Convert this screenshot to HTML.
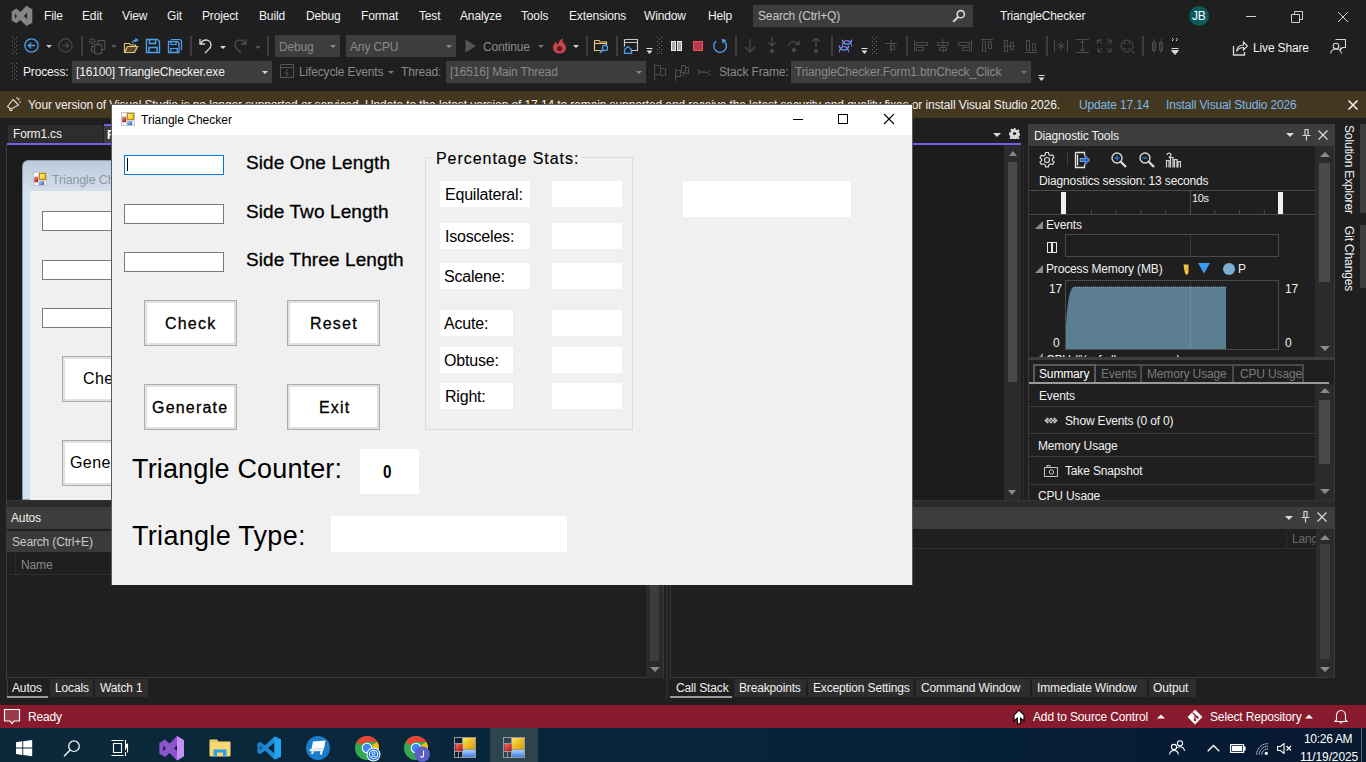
<!DOCTYPE html>
<html><head><meta charset="utf-8">
<style>
*{margin:0;padding:0;box-sizing:border-box}
html,body{width:1366px;height:762px;overflow:hidden;background:#1f1f1f;font-family:"Liberation Sans",sans-serif;font-size:12px;color:#f1f1f1;letter-spacing:-0.15px}
.a{position:absolute}
.t{position:absolute;white-space:nowrap;line-height:1}
.dd{position:absolute;background:#3d3d3d}
.arr{position:absolute;width:0;height:0;border-left:3px solid transparent;border-right:3px solid transparent;border-top:3px solid #c8c8c8}
.sep{position:absolute;width:2px;background:#3d3d3d;top:36px;height:20px}
.grip{position:absolute;width:5px;background-image:linear-gradient(0deg,transparent 1px,#1f1f1f 1px),linear-gradient(90deg,#5a5a5a 1px,transparent 1px);background-size:3px 2px}
.btn{width:93px;height:46px;background:#fff;border:1px solid #adadad;box-shadow:inset 0 0 0 2px #e1e1e1}
.fl{color:#000;font-size:19px;letter-spacing:0.1px;-webkit-text-stroke:0.3px #000}
.fb{color:#000;font-size:16px;letter-spacing:1.2px;-webkit-text-stroke:0.3px #000}
.fs{color:#000;font-size:16px;letter-spacing:-0.2px}
.fx{color:#000;font-size:27px;letter-spacing:0.3px}
.wb{height:26px;background:#fff}
</style></head><body>
<svg width="0" height="0" style="position:absolute"><defs><pattern id="gp" width="4" height="4" patternUnits="userSpaceOnUse"><rect x="0" y="0" width="1" height="1" fill="#6a6a6a"/><rect x="2" y="2" width="1" height="1" fill="#6a6a6a"/></pattern></defs></svg>

<!-- ===== Title / menu bar ===== -->
<div class="a" style="left:0;top:0;width:1366px;height:31px;background:#1f1f1f"></div>
<svg class="a" style="left:0;top:0" width="40" height="30" viewBox="0 0 40 30"><path d="M16.3 8.6L20.3 11.9L26.4 5.7L32.3 9.3V22.7L26.4 26.1L20.3 20L16.3 23.3L11.7 20.5V11.5ZM14.9 13.6V18.4L17.2 16ZM27 12.8L24 16L27 19.1Z" fill="#858585" fill-rule="evenodd"/></svg>
<div class="t" style="left:44px;top:10px">File</div>
<div class="t" style="left:82px;top:10px">Edit</div>
<div class="t" style="left:122px;top:10px">View</div>
<div class="t" style="left:167px;top:10px">Git</div>
<div class="t" style="left:202px;top:10px">Project</div>
<div class="t" style="left:259px;top:10px">Build</div>
<div class="t" style="left:306px;top:10px">Debug</div>
<div class="t" style="left:361px;top:10px">Format</div>
<div class="t" style="left:419px;top:10px">Test</div>
<div class="t" style="left:460px;top:10px">Analyze</div>
<div class="t" style="left:521px;top:10px">Tools</div>
<div class="t" style="left:569px;top:10px">Extensions</div>
<div class="t" style="left:644px;top:10px">Window</div>
<div class="t" style="left:708px;top:10px">Help</div>
<div class="a" style="left:753px;top:5px;width:220px;height:22px;background:#3d3d3d"></div>
<div class="t" style="left:758px;top:10px;color:#c8c8c8">Search (Ctrl+Q)</div>
<div class="t" style="left:1000px;top:10px;color:#f1f1f1">TriangleChecker</div>
<div class="a" style="left:1189px;top:6px;width:20px;height:20px;border-radius:50%;background:#0b5a5d"></div>
<div class="t" style="left:1192px;top:10px;font-size:12px;color:#fff">JB</div>
<div class="a" style="left:1246px;top:16px;width:10px;height:1px;background:#d0d0d0"></div>
<svg class="a" style="left:952px;top:9px" width="14" height="14" viewBox="0 0 14 14"><circle cx="8.8" cy="5.2" r="3.6" fill="none" stroke="#d8d8d8" stroke-width="1.6"/><path d="M6.3 7.8L1.2 12.9" stroke="#d8d8d8" stroke-width="2"/></svg>
<svg class="a" style="left:1291px;top:11px" width="12" height="12" viewBox="0 0 12 12"><path d="M0.5 3.5h8v8h-8z" fill="none" stroke="#d0d0d0"/><path d="M3.5 3.5v-3h8v8h-3" fill="none" stroke="#d0d0d0"/></svg>
<svg class="a" style="left:1337px;top:11px" width="12" height="12" viewBox="0 0 12 12"><path d="M1 1l10 10M11 1L1 11" stroke="#d0d0d0" stroke-width="1"/></svg>


<!-- ===== Toolbar row 1 ===== -->
<svg class="a" style="left:12px;top:37px" width="5" height="17"><rect width="5" height="17" fill="url(#gp)"/></svg>
<svg class="a" style="left:24px;top:38px" width="15" height="15" viewBox="0 0 15 15"><circle cx="7.5" cy="7.5" r="6.6" fill="none" stroke="#4fa0ea" stroke-width="1.3"/><path d="M11 7.5H4.3M7.2 4.6L4.3 7.5L7.2 10.4" fill="none" stroke="#4fa0ea" stroke-width="1.3"/></svg>
<div class="arr" style="left:46px;top:45px"></div>
<svg class="a" style="left:58px;top:38px" width="15" height="15" viewBox="0 0 15 15"><circle cx="7.5" cy="7.5" r="6.6" fill="none" stroke="#4a4a4a" stroke-width="1.2"/><path d="M4 7.5H10.7M7.8 4.6L10.7 7.5L7.8 10.4" fill="none" stroke="#4a4a4a" stroke-width="1.2"/></svg>
<div class="sep" style="left:81px"></div>
<svg class="a" style="left:87px;top:37px" width="19" height="18" viewBox="0 0 19 18"><g fill="none" stroke="#5a5a5a" stroke-width="1"><path d="M10.9 3.6h7v9h-7z"/><path d="M7.7 7.7h7v9h-7z" fill="#1f1f1f"/><path d="M7.5 9.3H4.6v5.5h3"/><path d="M5.3 1v2.4M5.3 5.5v2.4M1.6 4.4h2.4M6.6 4.4h2.4M2.8 1.9l1.3 1.3M6.5 5.6l1.3 1.3M7.8 1.9L6.5 3.2M4.1 5.6L2.8 6.9"/></g></svg>
<div class="arr" style="left:111px;top:45px;border-top-color:#5a5a5a"></div>
<svg class="a" style="left:123px;top:38px" width="16" height="16" viewBox="0 0 16 16"><path d="M1.5 5.5h5l1 1.5h5v2" fill="none" stroke="#e8c47a" stroke-width="1.2"/><path d="M1.5 5.5V14.5h10l3-6h-10l-3 6" fill="#5a4a2a" stroke="#e8c47a" stroke-width="1.2"/><path d="M9.5 5.5c0-2.5 2-3.5 4.5-3.5M12 0.5L14.5 2L12 3.8" fill="none" stroke="#4fa0ea" stroke-width="1.2"/></svg>
<svg class="a" style="left:145px;top:38px" width="16" height="16" viewBox="0 0 16 16"><path d="M1.5 1.5h11l2 2v11h-13z" fill="none" stroke="#4fa0ea" stroke-width="1.4"/><path d="M4.5 1.5v4h6v-4M4 14.5v-5h8v5" fill="none" stroke="#4fa0ea" stroke-width="1.4"/></svg>
<svg class="a" style="left:167px;top:38px" width="16" height="16" viewBox="0 0 16 16"><path d="M4 1.5h9l1.5 1.5v9" fill="none" stroke="#4fa0ea" stroke-width="1.2"/><path d="M1.5 3.5h9l1.5 1.5v9.5h-10.5z" fill="none" stroke="#4fa0ea" stroke-width="1.3"/><path d="M4 3.5v3h5v-3M3.8 14.5v-4h6.4v4" fill="none" stroke="#4fa0ea" stroke-width="1.2"/></svg>
<div class="sep" style="left:190px"></div>
<svg class="a" style="left:198px;top:37px" width="15" height="17" viewBox="0 0 15 17"><path d="M2 2v5h5" fill="none" stroke="#d8d8d8" stroke-width="1.3"/><path d="M2.3 6.8C4 4 6 3 8 3c3 0 5 2.3 5 5 0 2-1 3.5-2.5 4.5L7 16" fill="none" stroke="#d8d8d8" stroke-width="1.3"/></svg>
<div class="arr" style="left:220px;top:46px;border-top-color:#d8d8d8"></div>
<svg class="a" style="left:233px;top:37px" width="15" height="17" viewBox="0 0 15 17"><path d="M13 2v5H8" fill="none" stroke="#4d4d4d" stroke-width="1.3"/><path d="M12.7 6.8C11 4 9 3 7 3 4 3 2 5.3 2 8c0 2 1 3.5 2.5 4.5L8 16" fill="none" stroke="#4d4d4d" stroke-width="1.3"/></svg>
<div class="arr" style="left:255px;top:46px;border-top-color:#555"></div>
<div class="sep" style="left:267px"></div>
<div class="dd" style="left:275px;top:35px;width:65px;height:22px"></div>
<div class="t" style="left:279px;top:41px;color:#8a8a8a">Debug</div>
<div class="arr" style="left:330px;top:45px;border-top-color:#8a8a8a"></div>
<div class="dd" style="left:346px;top:35px;width:110px;height:22px"></div>
<div class="t" style="left:350px;top:41px;color:#8a8a8a">Any CPU</div>
<div class="arr" style="left:446px;top:45px;border-top-color:#8a8a8a"></div>
<svg class="a" style="left:465px;top:39px" width="12" height="14" viewBox="0 0 12 14"><path d="M0.5 0.5L11 7L0.5 13.5Z" fill="#555"/></svg>
<div class="t" style="left:483px;top:41px;color:#8a8a8a">Continue</div>
<div class="arr" style="left:538px;top:45px;border-top-color:#777"></div>
<svg class="a" style="left:552px;top:38px" width="15" height="16" viewBox="0 0 15 16"><path d="M7.5 15.5C3.5 15.5 1 13 1 9.5 1 6.5 3 5 4 3.5 4.5 5 5 6 6 6.5 6 4 8 1.5 11 0.5 10 2.5 10.5 4 12 5.5 13.5 7 14 8.5 14 10 14 13 11.5 15.5 7.5 15.5Z" fill="#c8444b"/><circle cx="7.5" cy="10.5" r="2.6" fill="#5a1e22"/></svg>
<div class="arr" style="left:573px;top:45px;border-top-color:#d8d8d8"></div>
<div class="sep" style="left:586px"></div>
<svg class="a" style="left:593px;top:38px" width="17" height="16" viewBox="0 0 17 16"><path d="M1.5 2.5h4.5l1 1.5h6.5v3" fill="none" stroke="#e8c47a" stroke-width="1.2"/><path d="M1.5 2.5v10h7" fill="none" stroke="#e8c47a" stroke-width="1.2"/><path d="M1.5 5.5h12" stroke="#e8c47a" stroke-width="1.2"/><circle cx="12" cy="10" r="2.6" fill="none" stroke="#4fa0ea" stroke-width="1.3"/><path d="M10.2 11.8L7 15" stroke="#4fa0ea" stroke-width="1.5"/></svg>
<div class="sep" style="left:616px"></div>
<svg class="a" style="left:623px;top:38px" width="16" height="16" viewBox="0 0 16 16"><path d="M1.5 1.5h13v11h-7" fill="none" stroke="#c8c8c8" stroke-width="1.2"/><path d="M1.5 1.5v7M1.5 4.5h13" stroke="#c8c8c8" stroke-width="1.2"/><path d="M1.5 11.5L5 8.5L8.5 11.5V15.5H1.5Z" fill="none" stroke="#4fa0ea" stroke-width="1.3"/></svg>
<svg class="a" style="left:646px;top:48px" width="7" height="7" viewBox="0 0 7 7"><path d="M0.5 0.5h6" stroke="#e0e0e0" stroke-width="1"/><path d="M0.5 2.5h6L3.5 6Z" fill="#e0e0e0"/></svg>
<svg class="a" style="left:657px;top:37px" width="5" height="17"><rect width="5" height="17" fill="url(#gp)"/></svg>
<div class="a" style="left:671px;top:41px;width:5px;height:10px;background:#a8a8a8;border:1px solid #ececec"></div>
<div class="a" style="left:677px;top:41px;width:5px;height:10px;background:#a8a8a8;border:1px solid #ececec"></div>
<div class="a" style="left:693px;top:41px;width:10px;height:10px;background:#b83c4a;border:1px solid #f24f5a"></div>
<svg class="a" style="left:712px;top:38px" width="16" height="16" viewBox="0 0 16 16"><path d="M4.3 3A6.3 6.3 0 1 0 12.6 3.6" fill="none" stroke="#4fa0ea" stroke-width="1.3"/><path d="M9.5 0.8L14.3 2L10.8 5.5Z" fill="#4fa0ea"/></svg>
<div class="sep" style="left:735px"></div>
<svg class="a" style="left:744px;top:38px" width="12" height="16" viewBox="0 0 12 16"><path d="M6 1v13M1 9l5 5 5-5" fill="none" stroke="#4d4d4d" stroke-width="1.2"/></svg>
<svg class="a" style="left:767px;top:37px" width="10" height="17" viewBox="0 0 10 17"><path d="M5 0v9M1.5 5.5L5 9l3.5-3.5" fill="none" stroke="#4d4d4d" stroke-width="1.2"/><circle cx="5" cy="14" r="2" fill="#4d4d4d"/></svg>
<svg class="a" style="left:787px;top:38px" width="14" height="16" viewBox="0 0 14 16"><path d="M1.5 8C2 4 6 2.5 9.5 4.5L12 6.5M12 2.5v4h-4" fill="none" stroke="#4d4d4d" stroke-width="1.2"/><circle cx="7" cy="12" r="2" fill="#4d4d4d"/></svg>
<svg class="a" style="left:811px;top:37px" width="10" height="17" viewBox="0 0 10 17"><path d="M5 10V1M1.5 4.5L5 1l3.5 3.5" fill="none" stroke="#4d4d4d" stroke-width="1.2"/><circle cx="5" cy="14" r="2" fill="#4d4d4d"/></svg>
<div class="sep" style="left:831px"></div>
<svg class="a" style="left:838px;top:38px" width="16" height="16" viewBox="0 0 16 16"><g fill="none" stroke-width="1.2" stroke-linecap="round"><path d="M4.3 7.8C5.5 1 12.5 1 13.7 7.8" stroke="#a064d8"/><path d="M4.3 2C5.5 7.5 12.5 7.5 13.7 2" stroke="#4fa8f0"/><path d="M1.3 13.8C2.5 7 9.5 7 10.7 13.8" stroke="#a064d8"/><path d="M1.3 8C2.5 13.5 9.5 13.5 10.7 8" stroke="#4fa8f0"/></g></svg>
<svg class="a" style="left:861px;top:48px" width="7" height="7" viewBox="0 0 7 7"><path d="M0.5 0.5h6" stroke="#e0e0e0" stroke-width="1"/><path d="M0.5 2.5h6L3.5 6Z" fill="#e0e0e0"/></svg>
<svg class="a" style="left:872px;top:37px" width="5" height="17"><rect width="5" height="17" fill="url(#gp)"/></svg>
<svg class="a" style="left:885px;top:40px" width="13" height="12" viewBox="0 0 13 12"><path d="M0 3.5h12M6 0v12M5.5 5.5h4v4h-4z" fill="none" stroke="#4d4d4d" stroke-width="1"/></svg>
<div class="sep" style="left:906px"></div>
<svg class="a" style="left:914px;top:39px" width="125" height="14" viewBox="0 0 125 14"><g fill="none" stroke="#4d4d4d" stroke-width="1">
<path d="M0.5 1v12M2.5 3.5h11v3h-11zM2.5 8.5h7v3h-7z"/>
<path d="M29 0v14M23.5 3.5h11v3h-11zM25.5 8.5h7v3h-7z"/>
<path d="M57.5 1v12M44.5 3.5h11v3h-11zM48.5 8.5h7v3h-7z"/>
<path d="M67 0.5h12M68.5 2.5h3v10h-3zM74.5 2.5h3v7h-3z"/>
<path d="M89 7h12M90.5 1.5h3v11h-3zM96.5 3.5h3v7h-3z"/>
<path d="M111 13.5h12M112.5 1.5h3v10h-3zM118.5 4.5h3v7h-3z"/>
</g></svg>
<div class="sep" style="left:1046px"></div>
<svg class="a" style="left:1054px;top:39px" width="82" height="15" viewBox="0 0 82 15"><g fill="none" stroke="#4d4d4d" stroke-width="1">
<path d="M0.5 1v12M13.5 1v12M7 3v8M3.5 5l7 4M10.5 5l-7 4"/>
<path d="M22 0.5h13M22 13.5h13M28.5 2v10M26 4l2.5-2 2.5 2M26 10l2.5 2 2.5-2"/>
<path d="M44 1h-0.5v4M44 1h4M57 1v4M57 1h-4M44 13v-4M44 13h4M57 13v-4M57 13h-4M44 1l4 4M57 1l-4 4M44 13l4-4M57 13l-4-4"/>
<circle cx="73" cy="7" r="6"/><path d="M77.5 11.5l3.5 3.5M70 5v-1h2M76 5v-1h-2M70 9v1h2M76 9v1h-2"/>
</g></svg>
<div class="sep" style="left:1142px"></div>
<svg class="a" style="left:1151px;top:39px" width="13" height="14" viewBox="0 0 13 14"><g fill="none" stroke="#4d4d4d" stroke-width="1"><path d="M1.5 3.5h3v8h-3zM8.5 3.5h3v8h-3zM3 0v14M10 0v14"/></g></svg>
<svg class="a" style="left:1171px;top:37px" width="8" height="18" viewBox="0 0 8 18"><path d="M1 1l1.5 1.5L1 4M5 1l1.5 1.5L5 4" stroke="#d8d8d8" fill="none" stroke-width="1"/><path d="M0.5 11.5h7M0.5 13.5h7L4 17.5Z" stroke="#d8d8d8" stroke-width="1" fill="#d8d8d8"/></svg>
<svg class="a" style="left:1232px;top:40px" width="16" height="16" viewBox="0 0 16 16"><path d="M1.5 6v9h11v-3" fill="none" stroke="#d8d8d8" stroke-width="1.3"/><path d="M4.5 11.5C5 7 8 5 11.5 5V2l4 4-4 4V7.5C8.5 7.5 6 9 4.5 11.5Z" fill="none" stroke="#d8d8d8" stroke-width="1.2"/></svg>
<div class="t" style="left:1253px;top:42px;color:#f1f1f1">Live Share</div>
<svg class="a" style="left:1330px;top:39px" width="16" height="15" viewBox="0 0 16 15"><path d="M5.5 0.5h10v8h-3l-2 2v-2" fill="none" stroke="#d8d8d8" stroke-width="1.1"/><circle cx="6" cy="7" r="2.8" fill="#1f1f1f" stroke="#d8d8d8" stroke-width="1.1"/><path d="M0.5 14.5C1 11 3 10 6 10s5 1 5.5 4.5" fill="none" stroke="#d8d8d8" stroke-width="1.1"/></svg>

<!-- ===== Toolbar row 2 ===== -->
<svg class="a" style="left:12px;top:63px" width="5" height="17"><rect width="5" height="17" fill="url(#gp)"/></svg>
<div class="t" style="left:23px;top:66px;color:#f1f1f1">Process:</div>
<div class="dd" style="left:72px;top:61px;width:200px;height:22px"></div>
<div class="t" style="left:76px;top:66px;color:#f1f1f1">[16100] TriangleChecker.exe</div>
<div class="arr" style="left:262px;top:71px;border-top-color:#d8d8d8"></div>
<svg class="a" style="left:280px;top:64px" width="14" height="14" viewBox="0 0 14 14"><path d="M0.5 0.5h13v13h-13zM0.5 3.5h13M8 5L5 9h3l-2 3.5" fill="none" stroke="#555" stroke-width="1"/></svg>
<div class="t" style="left:299px;top:66px;color:#8a8a8a">Lifecycle Events</div>
<div class="arr" style="left:388px;top:71px;border-top-color:#777"></div>
<div class="t" style="left:401px;top:66px;color:#8a8a8a">Thread:</div>
<div class="dd" style="left:446px;top:61px;width:200px;height:22px"></div>
<div class="t" style="left:450px;top:66px;color:#8a8a8a">[16516] Main Thread</div>
<div class="arr" style="left:636px;top:71px;border-top-color:#8a8a8a"></div>
<svg class="a" style="left:654px;top:64px" width="58" height="17" viewBox="0 0 58 17"><g fill="none" stroke="#4d4d4d" stroke-width="1"><path d="M0.5 0v16M0.5 1.5h6v9h-6M6.5 4.5h5v7h-5"/><path d="M21.5 5v12M21.5 6.5h5v6h-5M26.5 8.5h3v4M27.5 1.5h4v7h-4v-7M31.5 3.5h3v6h-3"/><path d="M43 5c3 3 8 6 14 1M43 11c3-3 8-6 14 1M44 8h2"/></g></svg>
<div class="t" style="left:719px;top:66px;color:#8a8a8a">Stack Frame:</div>
<div class="dd" style="left:791px;top:61px;width:240px;height:22px"></div>
<div class="t" style="left:795px;top:66px;color:#8a8a8a">TriangleChecker.Form1.btnCheck_Click</div>
<div class="arr" style="left:1021px;top:71px;border-top-color:#777"></div>
<svg class="a" style="left:1038px;top:75px" width="7" height="7" viewBox="0 0 7 7"><path d="M0.5 0.5h6" stroke="#e0e0e0" stroke-width="1"/><path d="M0.5 2.5h6L3.5 6Z" fill="#e0e0e0"/></svg>

<!-- ===== Banner ===== -->
<div class="a" style="left:0;top:91px;width:1366px;height:27px;background:#44371f"></div>
<svg class="a" style="left:6px;top:96px" width="16" height="16" viewBox="0 0 16 16"><path d="M1.5 10.5L7 3.5L12.5 9L5 13Z" fill="none" stroke="#d8d8d8" stroke-width="1.2" stroke-linejoin="round"/><path d="M3.5 12.5C3 14.5 5.5 15.5 6.5 13.5" fill="none" stroke="#d8d8d8" stroke-width="1.1"/><path d="M11 1v2M13.5 2.5l-1.5 1.5M15 6h-2" stroke="#d8d8d8" stroke-width="1.1"/></svg>
<div class="t" style="left:28px;top:99px;color:#f1f1f1;letter-spacing:-0.1px">Your version of Visual Studio is no longer supported or serviced. Update to the latest version of 17.14 to remain supported and receive the latest security and quality fixes or install Visual Studio 2026.</div>
<div class="t" style="left:1079px;top:99px;color:#7bb7ee">Update 17.14</div>
<div class="t" style="left:1166px;top:99px;color:#7bb7ee">Install Visual Studio 2026</div>
<svg class="a" style="left:1347px;top:99px" width="12" height="12" viewBox="0 0 12 12"><path d="M1.5 1.5l9 9M10.5 1.5l-9 9" stroke="#f0f0f0" stroke-width="1.6"/></svg>


<!-- ===== Document area ===== -->
<div class="a" style="left:0;top:118px;width:1028px;height:382px;background:#1f1f1f"></div>
<div class="a" style="left:8px;top:125px;width:95px;height:18px;background:#2d2d2d"></div>
<div class="t" style="left:13px;top:128px;color:#f1f1f1">Form1.cs</div>
<div class="a" style="left:104px;top:124px;width:300px;height:19px;background:#3d3d3d;border-top:2px solid #7160e8"></div>
<div class="t" style="left:107px;top:129px;color:#fff;font-weight:bold">Form1.cs [Design]</div>
<div class="a" style="left:7px;top:143px;width:1014px;height:2px;background:#7160e8"></div>
<div class="arr" style="left:993px;top:133px;border-left-width:4px;border-right-width:4px;border-top-width:4px;border-top-color:#d8d8d8"></div>
<svg class="a" style="left:1009px;top:128px" width="11" height="11" viewBox="0 0 11 11"><path d="M4.6 0h1.8l0.3 1.6 1.2 0.6 1.4-0.9 1.3 1.3-0.9 1.4 0.6 1.2 1.6 0.3v1.8l-1.6 0.3-0.6 1.2 0.9 1.4-1.3 1.3-1.4-0.9-1.2 0.6-0.3 1.6H4.6l-0.3-1.6-1.2-0.6-1.4 0.9-1.3-1.3 0.9-1.4-0.6-1.2L0 6.4V4.6l1.6-0.3 0.6-1.2-0.9-1.4 1.3-1.3 1.4 0.9 1.2-0.6Z" fill="#d8d8d8"/><circle cx="5.5" cy="5.5" r="1.6" fill="#1f1f1f"/></svg>
<div class="a" style="left:6px;top:145px;width:1px;height:355px;background:#3a3a3a"></div>
<div class="a" style="left:7px;top:145px;width:997px;height:355px;background:#1b1b1b"></div>
<div class="a" style="left:1004px;top:145px;width:17px;height:355px;background:#2b2b2b"></div>
<div class="a" style="left:1008px;top:162px;width:9px;height:220px;background:#4a4a4a"></div>
<div class="a" style="left:1008px;top:490px;width:0;height:0;border-left:4px solid transparent;border-right:4px solid transparent;border-top:5px solid #8a8a8a"></div>
<div class="a" style="left:1009px;top:151px;width:0;height:0;border-left:4px solid transparent;border-right:4px solid transparent;border-bottom:5px solid #8a8a8a"></div>
<div class="a" style="left:1021px;top:118px;width:7px;height:382px;background:#1f1f1f"></div>
<div class="a" style="left:1023px;top:145px;width:1px;height:355px;background:#2d2d2d"></div>
<!-- designer form preview -->
<div class="a" style="left:22px;top:160px;width:200px;height:340px;border:1px solid #8a9ab0;border-radius:6px 0 0 0;background:linear-gradient(#bccadb,#d3dfec 30px,#d5e2f0 31px)"></div>
<svg class="a" style="left:33px;top:172px" width="14" height="14" viewBox="0 0 14 14"><defs><linearGradient id="diy" x1="0" y1="0" x2="1" y2="1"><stop offset="0" stop-color="#fff2a0"/><stop offset="1" stop-color="#f2b800"/></linearGradient><linearGradient id="dir" x1="0" y1="0" x2="1" y2="1"><stop offset="0" stop-color="#ff9a9a"/><stop offset="1" stop-color="#a80000"/></linearGradient><linearGradient id="dib" x1="0" y1="0" x2="1" y2="1"><stop offset="0" stop-color="#b8d8ff"/><stop offset="1" stop-color="#2a62d0"/></linearGradient></defs><rect x="0.5" y="0.5" width="13" height="13" fill="#fff" stroke="#c4c4c4"/><path d="M5.5 0.5V13.5M0.5 4.5H5.5M0.5 10.5H5.5M5.5 8.5H13.5M2.5 10.5V13.5M11.5 8.5V13.5" stroke="#d4d4d4" stroke-width="1" fill="none"/><rect x="6.5" y="1.5" width="6" height="6" fill="url(#diy)" stroke="#b98c00" stroke-width="1"/><rect x="1" y="5" width="4" height="5" rx="0.5" fill="url(#dir)"/><rect x="6" y="9" width="5" height="4" fill="url(#dib)"/></svg>
<div class="t" style="left:52px;top:174px;color:#8d97a3;font-size:12.5px">Triangle Checker</div>
<div class="a" style="left:30px;top:191px;width:100px;height:309px;background:#f0f0f0"></div>
<div class="a" style="left:42px;top:211px;width:80px;height:20px;background:#fff;border:1px solid #7a7a7a"></div>
<div class="a" style="left:42px;top:260px;width:80px;height:20px;background:#fff;border:1px solid #7a7a7a"></div>
<div class="a" style="left:42px;top:308px;width:80px;height:20px;background:#fff;border:1px solid #7a7a7a"></div>
<div class="a" style="left:62px;top:356px;width:60px;height:46px;background:#fff;border:1px solid #adadad;box-shadow:inset 0 0 0 2px #e1e1e1"></div>
<div class="t" style="left:83px;top:371px;color:#000;font-size:16px;letter-spacing:0.4px">Check</div>
<div class="a" style="left:62px;top:440px;width:60px;height:46px;background:#fff;border:1px solid #adadad;box-shadow:inset 0 0 0 2px #e1e1e1"></div>
<div class="t" style="left:70px;top:455px;color:#000;font-size:16px;letter-spacing:0.4px">Generate</div>

<!-- ===== Diagnostic Tools ===== -->
<div class="a" style="left:1028px;top:124px;width:307px;height:22px;background:#3d3d3d"></div>
<div class="t" style="left:1034px;top:130px;color:#f1f1f1">Diagnostic Tools</div>
<div class="arr" style="left:1286px;top:133px;border-left-width:4px;border-right-width:4px;border-top-width:4px;border-top-color:#d8d8d8"></div>
<svg class="a" style="left:1302px;top:129px" width="9" height="12" viewBox="0 0 9 12"><path d="M2.5 0.5h4M3 0.5v6M6 0.5v6M0.5 6.5h8M4.5 6.5v5" stroke="#d8d8d8" stroke-width="1.2" fill="none"/></svg>
<svg class="a" style="left:1318px;top:130px" width="10" height="10" viewBox="0 0 10 10"><path d="M0.5 0.5l9 9M9.5 0.5l-9 9" stroke="#d8d8d8" stroke-width="1.3"/></svg>
<div class="a" style="left:1028px;top:146px;width:307px;height:354px;background:#1f1f1f;border-left:1px solid #3a3a3a;border-right:1px solid #3a3a3a"></div>
<svg class="a" style="left:1038px;top:151px" width="18" height="18" viewBox="0 0 18 18"><g fill="none" stroke="#d8d8d8" stroke-width="1.2"><circle cx="9" cy="9" r="2.5"/><path d="M7.6 1.5h2.8l0.5 2.2 1.6 0.9 2.1-0.7 1.4 2.4-1.6 1.5v1.8l1.6 1.5-1.4 2.4-2.1-0.7-1.6 0.9-0.5 2.2H7.6l-0.5-2.2-1.6-0.9-2.1 0.7-1.4-2.4 1.6-1.5V8.2L2 6.7l1.4-2.4 2.1 0.7 1.6-0.9z"/></g></svg>
<div class="a" style="left:1067px;top:152px;width:1px;height:14px;background:#3f3f3f"></div>
<svg class="a" style="left:1074px;top:151px" width="18" height="18" viewBox="0 0 18 18"><path d="M1.5 1.5h9v3M1.5 1.5v15h9v-3M3.5 3.5v11" fill="none" stroke="#e8e8e8" stroke-width="1.3"/><path d="M6 7.5h5v-3l5 4.5-5 4.5v-3H6z" fill="#1f6fd0" stroke="#d8e8ff" stroke-width="0.5"/></svg>
<svg class="a" style="left:1111px;top:152px" width="16" height="16" viewBox="0 0 16 16"><circle cx="6" cy="6" r="5" fill="#1f1f1f" stroke="#d8d8d8" stroke-width="1.4"/><path d="M9.5 9.5l5.5 5.5" stroke="#d8d8d8" stroke-width="2.4"/><path d="M3.5 6h5M6 3.5v5" stroke="#2e7ad8" stroke-width="1.4"/></svg>
<svg class="a" style="left:1139px;top:152px" width="16" height="16" viewBox="0 0 16 16"><circle cx="6" cy="6" r="5" fill="#1f1f1f" stroke="#d8d8d8" stroke-width="1.4"/><path d="M9.5 9.5l5.5 5.5" stroke="#d8d8d8" stroke-width="2.4"/><path d="M3.5 6h5" stroke="#2e7ad8" stroke-width="1.4"/></svg>
<svg class="a" style="left:1165px;top:151px" width="16" height="17" viewBox="0 0 16 17"><path d="M1.5 16.5V9.5h2.5v7M5.5 16.5V6.5h2.5v10M9.5 16.5V8.5h2.5v8M13 16.5v-6h2.5v6" fill="none" stroke="#d8d8d8" stroke-width="1.2"/><path d="M2 4c0-2.5 4-2.5 4 0 0 1.5-2 1.5-2 3" fill="none" stroke="#d8d8d8" stroke-width="1.2"/></svg>
<div class="t" style="left:1039px;top:175px;color:#f1f1f1">Diagnostics session: 13 seconds</div>
<div class="a" style="left:1029px;top:190px;width:286px;height:1px;background:#4a4a4a"></div>
<div class="a" style="left:1029px;top:214px;width:286px;height:1px;background:#4a4a4a"></div>
<div class="a" style="left:1190px;top:191px;width:1px;height:23px;background:#4a4a4a"></div>
<div class="t" style="left:1192px;top:193px;color:#f1f1f1;font-size:11px;letter-spacing:-0.4px">10s</div>
<div class="a" style="left:1061px;top:192px;width:5px;height:22px;background:#f0f0f0"></div>
<div class="a" style="left:1278px;top:192px;width:5px;height:22px;background:#f0f0f0"></div>
<div class="a" style="left:1091px;top:210px;width:176px;height:4px;background-image:linear-gradient(90deg,#4a4a4a 1px,transparent 1px);background-size:24.7px 4px;background-position:0 0"></div>
<div class="a" style="left:1315px;top:146px;width:19px;height:211px;background:#2b2b2b"></div>
<div class="a" style="left:1319px;top:163px;width:11px;height:119px;background:#4a4a4a"></div>
<div class="a" style="left:1320px;top:152px;width:0;height:0;border-left:5px solid transparent;border-right:5px solid transparent;border-bottom:5px solid #8a8a8a"></div>
<div class="a" style="left:1320px;top:346px;width:0;height:0;border-left:5px solid transparent;border-right:5px solid transparent;border-top:5px solid #8a8a8a"></div>
<div class="a" style="left:1035px;top:221px;width:0;height:0;border-left:8px solid transparent;border-bottom:8px solid #8a8a8a"></div>
<div class="t" style="left:1046px;top:219px;color:#f1f1f1">Events</div>
<div class="a" style="left:1047px;top:242px;width:10px;height:11px;border:1.5px solid #e8e8e8;border-left-width:1.5px"></div>
<div class="a" style="left:1051px;top:242px;width:2px;height:11px;background:#e8e8e8"></div>
<div class="a" style="left:1065px;top:234px;width:214px;height:23px;border:1px solid #4a4a4a"></div>
<div class="a" style="left:1190px;top:235px;width:1px;height:21px;background:#3a3a3a"></div>
<div class="a" style="left:1035px;top:265px;width:0;height:0;border-left:8px solid transparent;border-bottom:8px solid #8a8a8a"></div>
<div class="t" style="left:1046px;top:263px;color:#f1f1f1">Process Memory (MB)</div>
<svg class="a" style="left:1183px;top:264px" width="6" height="11" viewBox="0 0 6 11"><path d="M0.5 0.5h5v7c0 2-1 3-2 3.5C2 10 1.5 8 0.5 0.5Z" fill="#f2c13d"/></svg>
<svg class="a" style="left:1198px;top:263px" width="12" height="11" viewBox="0 0 12 11"><path d="M0 0h12L6 10.5Z" fill="#3a9cf0"/></svg>
<div class="a" style="left:1223px;top:263px;width:12px;height:12px;border-radius:50%;background:#7bafd4"></div>
<div class="t" style="left:1238px;top:263px;color:#f1f1f1">P</div>
<div class="t" style="left:1049px;top:283px;color:#f1f1f1">17</div>
<div class="t" style="left:1053px;top:337px;color:#f1f1f1">0</div>
<div class="t" style="left:1285px;top:283px;color:#f1f1f1">17</div>
<div class="t" style="left:1285px;top:337px;color:#f1f1f1">0</div>
<div class="a" style="left:1065px;top:280px;width:214px;height:70px;border:1px solid #4a4a4a"></div>
<svg class="a" style="left:1066px;top:281px" width="212" height="68" viewBox="0 0 212 68"><path d="M0 68V45C1 25 3 10 7 6H160V68Z" fill="#5b7e93"/><path d="M9 6H160" stroke="#7aa3ba" stroke-width="1" stroke-dasharray="1 1"/><path d="M124.5 0V68" stroke="#6d8fa3" stroke-width="1"/><path d="M124.5 0V6" stroke="#3a3a3a" stroke-width="1"/></svg>
<div class="a" style="left:1035px;top:353px;width:0;height:0;border-left:8px solid transparent;border-bottom:8px solid #8a8a8a;clip-path:inset(0 0 4px 0)"></div><div class="a" style="left:1046px;top:354px;width:200px;height:3px;overflow:hidden"><div class="t" style="left:0;top:0;color:#f1f1f1">CPU (% of all processors)</div></div>
<div class="a" style="left:1029px;top:357px;width:305px;height:3px;background:#3d3d3d"></div>
<div class="a" style="left:1033px;top:364px;width:63px;height:19px;border:2px solid #5a5a5a;border-bottom:none"></div>
<div class="t" style="left:1039px;top:368px;color:#fff">Summary</div>
<div class="a" style="left:1096px;top:364px;width:46px;height:19px;border:2px solid #4a4a4a;border-bottom:none;border-left:none"></div>
<div class="t" style="left:1101px;top:368px;color:#7a7a7a">Events</div>
<div class="a" style="left:1142px;top:364px;width:92px;height:19px;border:2px solid #4a4a4a;border-bottom:none;border-left:none"></div>
<div class="t" style="left:1147px;top:368px;color:#7a7a7a">Memory Usage</div>
<div class="a" style="left:1234px;top:364px;width:70px;height:19px;border:2px solid #4a4a4a;border-bottom:none;border-left:none"></div>
<div class="t" style="left:1240px;top:368px;color:#7a7a7a">CPU Usage</div>
<div class="a" style="left:1029px;top:382px;width:300px;height:2px;background:#9a9a9a"></div>
<div class="t" style="left:1039px;top:390px;color:#f1f1f1">Events</div>
<div class="a" style="left:1029px;top:406px;width:286px;height:1px;background:#3d3d3d"></div>
<svg class="a" style="left:1044px;top:417px" width="14" height="7" viewBox="0 0 14 7"><path d="M0 3.5L3.5 0 7 3.5 3.5 7ZM3.5 3.5L7 0l3.5 3.5L7 7ZM7 3.5l3.5-3.5L14 3.5 10.5 7Z" fill="#bdbdbd" stroke="#1f1f1f" stroke-width="0.6"/></svg>
<div class="t" style="left:1065px;top:415px;color:#f1f1f1">Show Events (0 of 0)</div>
<div class="a" style="left:1029px;top:433px;width:286px;height:1px;background:#3d3d3d"></div>
<div class="t" style="left:1038px;top:440px;color:#f1f1f1">Memory Usage</div>
<div class="a" style="left:1029px;top:456px;width:286px;height:1px;background:#3d3d3d"></div>
<svg class="a" style="left:1044px;top:465px" width="14" height="12" viewBox="0 0 14 12"><path d="M0.5 2.5h13v9h-13z" fill="none" stroke="#c8c8c8"/><path d="M3 2.5v-2h3v2" fill="none" stroke="#c8c8c8"/><circle cx="7.5" cy="7" r="2.2" fill="none" stroke="#c8c8c8"/></svg>
<div class="t" style="left:1065px;top:465px;color:#f1f1f1">Take Snapshot</div>
<div class="a" style="left:1029px;top:484px;width:286px;height:1px;background:#3d3d3d"></div>
<div class="t" style="left:1038px;top:490px;color:#f1f1f1;height:10px;overflow:hidden">CPU Usage</div>
<div class="a" style="left:1315px;top:384px;width:19px;height:116px;background:#2b2b2b"></div>
<div class="a" style="left:1319px;top:400px;width:11px;height:64px;background:#4a4a4a"></div>
<div class="a" style="left:1320px;top:388px;width:0;height:0;border-left:5px solid transparent;border-right:5px solid transparent;border-bottom:5px solid #8a8a8a"></div>
<div class="a" style="left:1320px;top:489px;width:0;height:0;border-left:5px solid transparent;border-right:5px solid transparent;border-top:5px solid #8a8a8a"></div>

<!-- right side vertical tabs -->
<div class="a" style="left:1335px;top:118px;width:31px;height:587px;background:#1f1f1f"></div>
<div class="a" style="left:1360px;top:124px;width:6px;height:89px;background:#3d3d3d"></div>
<div class="a" style="left:1360px;top:225px;width:6px;height:63px;background:#3d3d3d"></div>
<div class="t" style="left:1343px;top:125px;color:#f1f1f1;writing-mode:vertical-rl">Solution Explorer</div>
<div class="t" style="left:1343px;top:226px;color:#f1f1f1;writing-mode:vertical-rl">Git Changes</div>

<!-- ===== Bottom panels ===== -->
<div class="a" style="left:7px;top:500px;width:1328px;height:7px;background:#2b2b2b;border-top:1px solid #333"></div>
<div class="a" style="left:6px;top:500px;width:1px;height:7px;background:#3a3a3a"></div>
<div class="a" style="left:7px;top:507px;width:657px;height:22px;background:#3d3d3d"></div>
<div class="t" style="left:11px;top:512px;color:#f1f1f1">Autos</div>
<div class="a" style="left:6px;top:507px;width:1px;height:172px;background:#3a3a3a"></div>
<div class="a" style="left:7px;top:531px;width:657px;height:21px;background:#3a3a3a"></div>
<div class="t" style="left:12px;top:536px;color:#c8c8c8">Search (Ctrl+E)</div>
<div class="a" style="left:7px;top:552px;width:657px;height:126px;background:#1f1f1f;border-right:1px solid #3a3a3a;border-bottom:1px solid #3a3a3a"></div>
<div class="a" style="left:15px;top:554px;width:1px;height:20px;background:#2d2d2d"></div>
<div class="a" style="left:7px;top:574px;width:639px;height:1px;background:#2d2d2d"></div>
<div class="t" style="left:21px;top:559px;color:#8a8a8a">Name</div>
<div class="a" style="left:646px;top:575px;width:17px;height:103px;background:#2b2b2b"></div>
<div class="a" style="left:650px;top:580px;width:9px;height:81px;background:#3d3d3d"></div>
<div class="a" style="left:650px;top:667px;width:0;height:0;border-left:5px solid transparent;border-right:5px solid transparent;border-top:5px solid #8a8a8a"></div>
<div class="a" style="left:7px;top:679px;width:41px;height:19px;border-left:1px solid #3a3a3a"></div>
<div class="a" style="left:7px;top:696px;width:41px;height:2px;background:#9a9a9a"></div>
<div class="t" style="left:12px;top:682px;color:#f1f1f1">Autos</div>
<div class="a" style="left:50px;top:679px;width:43px;height:18px;background:#2d2d2d"></div>
<div class="t" style="left:55px;top:682px;color:#f1f1f1">Locals</div>
<div class="a" style="left:95px;top:679px;width:53px;height:18px;background:#2d2d2d"></div>
<div class="t" style="left:100px;top:682px;color:#f1f1f1">Watch 1</div>
<div class="a" style="left:664px;top:507px;width:6px;height:198px;background:#1f1f1f"></div>
<div class="a" style="left:666px;top:507px;width:2px;height:191px;background:#2b2b2b"></div>

<div class="a" style="left:670px;top:507px;width:665px;height:22px;background:#3d3d3d"></div>
<div class="arr" style="left:1285px;top:516px;border-left-width:4px;border-right-width:4px;border-top-width:4px;border-top-color:#d8d8d8"></div>
<svg class="a" style="left:1301px;top:511px" width="9" height="12" viewBox="0 0 9 12"><path d="M2.5 0.5h4M3 0.5v6M6 0.5v6M0.5 6.5h8M4.5 6.5v5" stroke="#d8d8d8" stroke-width="1.2" fill="none"/></svg>
<svg class="a" style="left:1317px;top:512px" width="10" height="10" viewBox="0 0 10 10"><path d="M0.5 0.5l9 9M9.5 0.5l-9 9" stroke="#d8d8d8" stroke-width="1.3"/></svg>
<div class="a" style="left:670px;top:529px;width:665px;height:149px;background:#1f1f1f;border-left:1px solid #3a3a3a;border-right:1px solid #3a3a3a;border-bottom:1px solid #3a3a3a"></div>
<div class="a" style="left:671px;top:548px;width:645px;height:1px;background:#2d2d2d"></div>
<div class="a" style="left:1286px;top:530px;width:1px;height:18px;background:#2d2d2d"></div>
<div class="t" style="left:1292px;top:533px;color:#6a6a6a;width:24px;overflow:hidden">Language</div>
<div class="a" style="left:1316px;top:529px;width:18px;height:148px;background:#2b2b2b"></div>
<div class="a" style="left:1320px;top:544px;width:10px;height:115px;background:#3d3d3d"></div>
<div class="a" style="left:1320px;top:535px;width:0;height:0;border-left:5px solid transparent;border-right:5px solid transparent;border-bottom:5px solid #8a8a8a"></div>
<div class="a" style="left:1320px;top:667px;width:0;height:0;border-left:5px solid transparent;border-right:5px solid transparent;border-top:5px solid #8a8a8a"></div>
<div class="a" style="left:670px;top:696px;width:62px;height:2px;background:#9a9a9a"></div>
<div class="t" style="left:676px;top:682px;color:#f1f1f1">Call Stack</div>
<div class="a" style="left:734px;top:679px;width:72px;height:18px;background:#2d2d2d"></div>
<div class="t" style="left:739px;top:682px;color:#f1f1f1">Breakpoints</div>
<div class="a" style="left:808px;top:679px;width:105px;height:18px;background:#2d2d2d"></div>
<div class="t" style="left:813px;top:682px;color:#f1f1f1">Exception Settings</div>
<div class="a" style="left:916px;top:679px;width:114px;height:18px;background:#2d2d2d"></div>
<div class="t" style="left:921px;top:682px;color:#f1f1f1">Command Window</div>
<div class="a" style="left:1032px;top:679px;width:115px;height:18px;background:#2d2d2d"></div>
<div class="t" style="left:1037px;top:682px;color:#f1f1f1">Immediate Window</div>
<div class="a" style="left:1149px;top:679px;width:47px;height:18px;background:#2d2d2d"></div>
<div class="t" style="left:1153px;top:682px;color:#f1f1f1">Output</div>

<!-- ===== Status bar ===== -->
<div class="a" style="left:0;top:705px;width:1366px;height:23px;background:#871b2d"></div>
<svg class="a" style="left:3px;top:708px" width="18" height="17" viewBox="0 0 18 17"><path d="M1.5 1.5H16.5V13H11L9 15.5L7 13H1.5Z" fill="#9b3a4a" stroke="#fff" stroke-width="1.2"/></svg>
<div class="t" style="left:28px;top:711px;color:#fff">Ready</div>
<svg class="a" style="left:1013px;top:709px" width="12" height="16" viewBox="0 0 12 16"><path d="M6 1.2L11 6.2V12L7.6 9.2V14.8H4.4V9.2L1 12V6.2Z" fill="#fff" stroke="#000" stroke-width="1.1" stroke-linejoin="miter"/></svg>
<svg class="a" style="left:1157px;top:714px" width="8" height="5" viewBox="0 0 8 5"><path d="M0 4.5L4 0.5L8 4.5Z" fill="#fff"/></svg>
<svg class="a" style="left:1187px;top:709px" width="16" height="16" viewBox="0 0 16 16"><path d="M8 0.5L15.5 8L8 15.5L0.5 8Z" fill="#fff"/><path d="M5.5 3.5L10 8M8 6V11.5M8 6L10.5 8.5" stroke="#8a1c2e" stroke-width="1.2"/><circle cx="8" cy="11" r="1.2" fill="#8a1c2e"/><circle cx="10.5" cy="8.5" r="1.2" fill="#8a1c2e"/></svg>
<svg class="a" style="left:1305px;top:714px" width="8" height="5" viewBox="0 0 8 5"><path d="M0 4.5L4 0.5L8 4.5Z" fill="#fff"/></svg>
<svg class="a" style="left:1334px;top:709px" width="14" height="15" viewBox="0 0 14 15"><path d="M2.5 11V6.5C2.5 3.5 4.5 1.5 7 1.5S11.5 3.5 11.5 6.5V11L13 12.5H1Z" fill="none" stroke="#fff" stroke-width="1.1"/><path d="M5.5 13.5C5.8 14.3 8.2 14.3 8.5 13.5" stroke="#fff" fill="none"/></svg>
<div class="t" style="left:1033px;top:711px;color:#fff">Add to Source Control</div>
<div class="t" style="left:1210px;top:711px;color:#fff">Select Repository</div>

<!-- ===== Taskbar ===== -->
<div class="a" style="left:0;top:728px;width:1366px;height:34px;background:linear-gradient(90deg,#0b293a,#08263a 45%,#062039 70%,#061b36 85%,#081a30)"></div>
<svg class="a" style="left:16px;top:740px" width="17" height="17" viewBox="0 0 17 17"><path d="M0 2.2L6.3 1.3V7.5H0ZM7.2 1.2L16.2 0V7.5H7.2ZM0 8.4H6.3V14.9L0 14ZM7.2 8.4H16.2V16.3L7.2 15Z" fill="#fff"/></svg>
<svg class="a" style="left:63px;top:740px" width="18" height="17" viewBox="0 0 18 17"><circle cx="11" cy="6.2" r="5.3" fill="none" stroke="#fff" stroke-width="1.2"/><path d="M7.2 10L1 16.3" stroke="#fff" stroke-width="1.3"/></svg>
<svg class="a" style="left:111px;top:740px" width="18" height="16" viewBox="0 0 18 16"><path d="M0.5 0.5h12M0.5 15.5h12M2.5 3.5h8v9h-8zM14.5 0v4M14.5 6v4M14.5 12v4M16.5 3.5v9" fill="none" stroke="#fff" stroke-width="1.1"/><rect x="14" y="4" width="3" height="4" fill="#fff"/></svg>
<svg class="a" style="left:158px;top:735px" width="26" height="26" viewBox="0 0 26 26"><g transform="translate(-12.7,-5.9) scale(1.2)" transform-origin="0 0"><path d="M16.3 8.6L20.3 11.9L26.4 5.7L32.3 9.3V22.7L26.4 26.1L20.3 20L16.3 23.3L11.7 20.5V11.5ZM14.9 13.6V18.4L17.2 16ZM27 12.8L24 16L27 19.1Z" fill="#8c55cc" fill-rule="evenodd"/><path d="M26.4 5.7L32.3 9.3V22.7L26.4 26.1Z" fill="#c48ff5"/></g></svg>
<svg class="a" style="left:209px;top:739px" width="22" height="18" viewBox="0 0 22 18"><path d="M0.5 1.5Q0.5 0.5 1.5 0.5H8L9.5 2.5H20.5Q21.5 2.5 21.5 3.5V16.5Q21.5 17.5 20.5 17.5H1.5Q0.5 17.5 0.5 16.5Z" fill="#f8d775"/><path d="M1.5 2.5H9" stroke="#e8b84a"/><path d="M4.5 17.5V10.5H17.5V17.5H14V13.5H8V17.5Z" fill="#29a3e6"/></svg>
<svg class="a" style="left:257px;top:736px" width="24" height="24" viewBox="0 0 24 24"><path d="M17.5 0.5L24 3.5V20.5L17.5 23.5L8 14.5L3.5 18L0.5 16.5V7.5L3.5 6L8 9.5ZM17.5 6.5L11 12L17.5 17.5ZM3 9.5V14.5L5.5 12Z" fill="#1f8ad8" fill-rule="evenodd"/><path d="M17.5 0.5L24 3.5V20.5L17.5 23.5Z" fill="#25a4ee"/><path d="M17.5 0.5L3.5 14L1 12.5L0.5 8L3.5 6L8 9.5Z" fill="#1a75bd" opacity="0.6"/></svg>
<svg class="a" style="left:306px;top:736px" width="24" height="24" viewBox="0 0 24 24"><circle cx="12" cy="12" r="12" fill="#1b7dc7"/><path d="M7 5.5L19.5 4.5L18 12.5L5.5 13Z" fill="#fff"/><path d="M3.5 13L18 12.5L17 15L4 15.5Z" fill="#e8eef5"/><path d="M6 15.5L5 18L7 18L8 15.5ZM14.5 15L14 18.5L16 18.5L16.5 15Z" fill="#fff"/></svg>
<svg class="a" style="left:355px;top:736px" width="27" height="26" viewBox="0 0 27 26"><circle cx="12" cy="12" r="12" fill="#34a853"/><path d="M12 0A12 12 0 0 1 22.4 6H12A6 6 0 0 0 6.8 9L1.6 6A12 12 0 0 1 12 0Z" fill="#ea4335"/><path d="M22.4 6A12 12 0 0 1 13 24L17.2 15A6 6 0 0 0 17.2 9Z" fill="#fbbc05"/><circle cx="12" cy="12" r="5.3" fill="#fff"/><circle cx="12" cy="12" r="4.2" fill="#4285f4"/><circle cx="18.5" cy="18.5" r="7" fill="#fff"/><circle cx="18.5" cy="18.5" r="6" fill="#1a73e8"/><circle cx="18.5" cy="18.5" r="4.2" fill="none" stroke="#fff" stroke-width="1.1"/><circle cx="18.5" cy="17.3" r="1.5" fill="none" stroke="#fff" stroke-width="1"/><path d="M16 21.2C16.5 19.8 20.5 19.8 21 21.2" fill="none" stroke="#fff"/></svg>
<svg class="a" style="left:404px;top:736px" width="27" height="26" viewBox="0 0 27 26"><circle cx="12" cy="12" r="12" fill="#34a853"/><path d="M12 0A12 12 0 0 1 22.4 6H12A6 6 0 0 0 6.8 9L1.6 6A12 12 0 0 1 12 0Z" fill="#ea4335"/><path d="M22.4 6A12 12 0 0 1 13 24L17.2 15A6 6 0 0 0 17.2 9Z" fill="#fbbc05"/><circle cx="12" cy="12" r="5.3" fill="#fff"/><circle cx="12" cy="12" r="4.2" fill="#4285f4"/><circle cx="18.2" cy="18.2" r="7.8" fill="#5c5fc8"/><path d="M19.5 14.5V20C19.5 21.5 17 21.5 16.5 20.2" fill="none" stroke="#fff" stroke-width="1.1"/></svg>
<svg class="a" style="left:454px;top:737px" width="22" height="21" viewBox="0 0 22 21"><rect x="0.5" y="0.5" width="21" height="20" fill="#0a2235" stroke="#9a9a9a"/><path d="M0.5 6.5h8M8.5 0.5v20M0.5 14.5h8M4.5 14.5v6M8.5 12.5h13" stroke="#9a9a9a" fill="none"/><defs><linearGradient id="gy1" x1="0" y1="0" x2="1" y2="1"><stop offset="0" stop-color="#ffe35a"/><stop offset="1" stop-color="#d89a00"/></linearGradient><linearGradient id="gb1" x1="0" y1="0" x2="0" y2="1"><stop offset="0" stop-color="#a8d0ff"/><stop offset="1" stop-color="#3f7fe0"/></linearGradient><linearGradient id="gr1" x1="0" y1="0" x2="1" y2="1"><stop offset="0" stop-color="#ff6a6a"/><stop offset="1" stop-color="#b01010"/></linearGradient></defs><rect x="9" y="1" width="12" height="11" fill="url(#gy1)"/><rect x="9" y="13" width="12" height="7" fill="url(#gb1)"/><rect x="1.5" y="7" width="7" height="7" fill="url(#gr1)"/></svg>
<div class="a" style="left:490px;top:728px;width:48px;height:34px;background:#2d444f"></div>
<svg class="a" style="left:503px;top:737px" width="22" height="21" viewBox="0 0 22 21"><rect x="0.5" y="0.5" width="21" height="20" fill="#2d444f" stroke="#9a9a9a"/><path d="M0.5 6.5h8M8.5 0.5v20M0.5 14.5h8M4.5 14.5v6M8.5 12.5h13" stroke="#9a9a9a" fill="none"/><defs><linearGradient id="gy2" x1="0" y1="0" x2="1" y2="1"><stop offset="0" stop-color="#ffe35a"/><stop offset="1" stop-color="#d89a00"/></linearGradient><linearGradient id="gb2" x1="0" y1="0" x2="0" y2="1"><stop offset="0" stop-color="#a8d0ff"/><stop offset="1" stop-color="#3f7fe0"/></linearGradient><linearGradient id="gr2" x1="0" y1="0" x2="1" y2="1"><stop offset="0" stop-color="#ff6a6a"/><stop offset="1" stop-color="#b01010"/></linearGradient></defs><rect x="9" y="1" width="12" height="11" fill="url(#gy2)"/><rect x="9" y="13" width="12" height="7" fill="url(#gb2)"/><rect x="1.5" y="7" width="7" height="7" fill="url(#gr2)"/></svg>
<svg class="a" style="left:1169px;top:740px" width="16" height="15" viewBox="0 0 16 15"><circle cx="5" cy="7" r="2.6" fill="none" stroke="#fff" stroke-width="1.1"/><path d="M0.5 14.5C1 11.5 3 10.5 5 10.5S9 11.5 9.5 14.5" fill="none" stroke="#fff" stroke-width="1.1"/><circle cx="11" cy="3.3" r="2.6" fill="none" stroke="#fff" stroke-width="1.1"/><path d="M8.5 8C9 7 10 6.8 11 6.8c2 0 4 1 4.5 4" fill="none" stroke="#fff" stroke-width="1.1"/></svg>
<svg class="a" style="left:1207px;top:744px" width="13" height="8" viewBox="0 0 13 8"><path d="M0.7 7.3L6.5 1.5L12.3 7.3" fill="none" stroke="#fff" stroke-width="1.3"/></svg>
<svg class="a" style="left:1230px;top:744px" width="16" height="9" viewBox="0 0 16 9"><rect x="0.6" y="0.6" width="13" height="7.8" fill="none" stroke="#fff" stroke-width="1.2"/><rect x="2" y="2" width="10.2" height="5" fill="#fff"/><rect x="14" y="2.5" width="1.6" height="4" fill="#fff"/></svg>
<svg class="a" style="left:1256px;top:743px" width="13" height="12" viewBox="0 0 13 12"><path d="M0.7 11.5A11 11 0 0 1 12 0.7M3.3 11.5A8.3 8.3 0 0 1 12 3.3M5.9 11.5A5.7 5.7 0 0 1 12 5.9" fill="none" stroke="#fff" stroke-width="0.9" stroke-dasharray="1.4 0.6"/><circle cx="10.3" cy="10.3" r="1.6" fill="#fff"/></svg>
<svg class="a" style="left:1277px;top:743px" width="15" height="11" viewBox="0 0 15 11"><path d="M0.6 3.5H3.5L7 0.6V10.4L3.5 7.5H0.6Z" fill="none" stroke="#fff" stroke-width="1.1"/><path d="M9.5 3L14 7.5M14 3L9.5 7.5" stroke="#fff" stroke-width="1.1"/></svg>
<div class="t" style="left:1304px;top:733px;color:#fff;font-size:12px;letter-spacing:-0.3px">10:26 AM</div>
<div class="t" style="left:1300px;top:751px;color:#fff;font-size:12px;letter-spacing:-0.1px">11/19/2025</div>
<div class="a" style="left:1361px;top:728px;width:1px;height:34px;background:#5a6670"></div>



<!-- ===== Form window ===== -->
<div class="a" style="left:111px;top:104px;width:802px;height:481px;background:#fff;border:1px solid #5a5a5a;border-bottom:none"></div>
<svg class="a" style="left:121px;top:112px" width="14" height="14" viewBox="0 0 14 14"><defs><linearGradient id="fiy" x1="0" y1="0" x2="1" y2="1"><stop offset="0" stop-color="#fff2a0"/><stop offset="1" stop-color="#f2b800"/></linearGradient><linearGradient id="fir" x1="0" y1="0" x2="1" y2="1"><stop offset="0" stop-color="#ff9a9a"/><stop offset="1" stop-color="#a80000"/></linearGradient><linearGradient id="fib" x1="0" y1="0" x2="1" y2="1"><stop offset="0" stop-color="#b8d8ff"/><stop offset="1" stop-color="#2a62d0"/></linearGradient></defs><rect x="0.5" y="0.5" width="13" height="13" fill="#fff" stroke="#c4c4c4"/><path d="M5.5 0.5V13.5M0.5 4.5H5.5M0.5 10.5H5.5M5.5 8.5H13.5M2.5 10.5V13.5M11.5 8.5V13.5" stroke="#d4d4d4" stroke-width="1" fill="none"/><rect x="6.5" y="1.5" width="6" height="6" fill="url(#fiy)" stroke="#b98c00" stroke-width="1"/><rect x="1" y="5" width="4" height="5" rx="0.5" fill="url(#fir)"/><rect x="6" y="9" width="5" height="4" fill="url(#fib)"/></svg>
<div class="t" style="left:141px;top:114px;color:#000;font-size:12px;letter-spacing:0">Triangle Checker</div>
<div class="a" style="left:793px;top:119px;width:10px;height:1px;background:#000"></div>
<div class="a" style="left:838px;top:114px;width:10px;height:10px;border:1px solid #000"></div>
<svg class="a" style="left:883px;top:113px" width="12" height="12" viewBox="0 0 12 12"><path d="M1 1l10 10M11 1L1 11" stroke="#000" stroke-width="1.1"/></svg>
<div class="a" style="left:112px;top:135px;width:800px;height:450px;background:#f0f0f0"></div>

<div class="a" style="left:124px;top:155px;width:100px;height:20px;background:#fff;border:1px solid #0078d7"></div>
<div class="a" style="left:127px;top:158px;width:1px;height:13px;background:#000"></div>
<div class="a" style="left:124px;top:204px;width:100px;height:20px;background:#fff;border:1px solid #7a7a7a"></div>
<div class="a" style="left:124px;top:252px;width:100px;height:20px;background:#fff;border:1px solid #7a7a7a"></div>
<div class="t fl" style="left:246px;top:153px">Side One Length</div>
<div class="t fl" style="left:246px;top:202px">Side Two Length</div>
<div class="t fl" style="left:246px;top:250px">Side Three Length</div>

<div class="a btn" style="left:144px;top:300px"></div>
<div class="t fb" style="left:165px;top:316px">Check</div>
<div class="a btn" style="left:287px;top:300px"></div>
<div class="t fb" style="left:310px;top:316px">Reset</div>
<div class="a btn" style="left:144px;top:384px"></div>
<div class="t fb" style="left:152px;top:400px">Generate</div>
<div class="a btn" style="left:287px;top:384px"></div>
<div class="t fb" style="left:319px;top:400px">Exit</div>

<div class="a" style="left:425px;top:157px;width:208px;height:273px;border:1px solid #dcdcdc"></div>
<div class="a" style="left:432px;top:148px;width:150px;height:20px;background:#f0f0f0"></div>
<div class="t fb" style="left:436px;top:151px;letter-spacing:0.95px;-webkit-text-stroke:0.15px #000">Percentage Stats:</div>
<div class="a wb" style="left:440px;top:181px;width:90px"></div><div class="t fs" style="left:445px;top:187px">Equilateral:</div>
<div class="a wb" style="left:552px;top:181px;width:70px"></div>
<div class="a wb" style="left:440px;top:223px;width:90px"></div><div class="t fs" style="left:445px;top:229px">Isosceles:</div>
<div class="a wb" style="left:552px;top:223px;width:70px"></div>
<div class="a wb" style="left:440px;top:263px;width:90px"></div><div class="t fs" style="left:444px;top:269px">Scalene:</div>
<div class="a wb" style="left:552px;top:263px;width:70px"></div>
<div class="a wb" style="left:440px;top:310px;width:73px"></div><div class="t fs" style="left:444px;top:316px">Acute:</div>
<div class="a wb" style="left:552px;top:310px;width:70px"></div>
<div class="a wb" style="left:440px;top:347px;width:73px"></div><div class="t fs" style="left:444px;top:353px">Obtuse:</div>
<div class="a wb" style="left:552px;top:347px;width:70px"></div>
<div class="a wb" style="left:440px;top:383px;width:73px"></div><div class="t fs" style="left:445px;top:389px">Right:</div>
<div class="a wb" style="left:552px;top:383px;width:70px"></div>

<div class="a" style="left:683px;top:181px;width:168px;height:36px;background:#fff"></div>

<div class="t fx" style="left:132px;top:456px;letter-spacing:0.15px">Triangle Counter:</div>
<div class="a" style="left:360px;top:449px;width:59px;height:45px;background:#fff"></div>
<div class="t" style="left:383px;top:463px;color:#000;font-size:18px;font-weight:bold;letter-spacing:0;transform:scaleX(0.85);transform-origin:0 0">0</div>
<div class="t fx" style="left:132px;top:523px">Triangle Type:</div>
<div class="a" style="left:331px;top:516px;width:236px;height:36px;background:#fff"></div>

</body></html>
